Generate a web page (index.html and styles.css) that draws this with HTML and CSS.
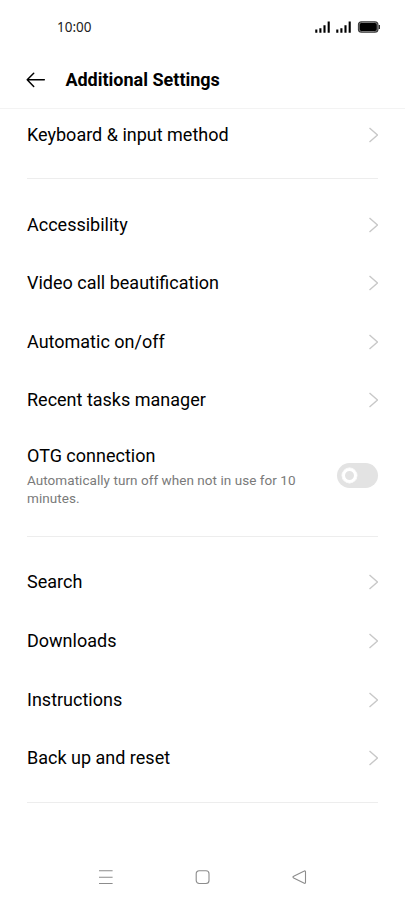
FILE: index.html
```html
<!DOCTYPE html>
<html lang="en">
<head>
<meta charset="utf-8">
<title>Additional Settings</title>
<link rel="stylesheet" href="styles.css">
</head>
<body>
<header class="status">
  <span class="time">10:00</span>
  <svg class="status-icons" width="66" height="14" viewBox="0 0 66 14">
    <g id="signal"><path d="M1.3 12.7V9.4M5.4 12.7V8.2M9.5 12.7V5.2M13.7 12.7V1.5" stroke="#000" stroke-width="2.1"/></g>
    <use href="#signal" x="21"/>
    <rect x="42.9" y="1.2" width="20.6" height="11.6" rx="3.6" fill="#333"/>
    <rect x="44.2" y="2.5" width="18" height="9" rx="2.4" fill="#000" stroke="#858585" stroke-width=".9"/>
    <path d="M64.3 5v4" stroke="#222" stroke-width="1.3"/>
  </svg>
</header>
<div class="title-bar">
  <svg class="back" width="20" height="16" viewBox="0 0 20 16"><path d="M18.3 7.7H1.2M7.7 1.2L1.2 7.7l6.5 6.8" stroke-linecap="round" stroke-linejoin="round"/></svg>
  <h1>Additional Settings</h1>
</div>
<main>
  <section class="group first">
    <div class="row"><span>Keyboard &amp; input method</span><svg class="chevron" viewBox="0 0 10 16"><path d="M1.5 1l8 7-8 7"/></svg></div>
  </section>
  <section class="group second">
    <div class="row"><span>Accessibility</span><svg class="chevron" viewBox="0 0 10 16"><path d="M1.5 1l8 7-8 7"/></svg></div>
    <div class="row"><span>Video call beautification</span><svg class="chevron" viewBox="0 0 10 16"><path d="M1.5 1l8 7-8 7"/></svg></div>
    <div class="row"><span>Automatic on/off</span><svg class="chevron" viewBox="0 0 10 16"><path d="M1.5 1l8 7-8 7"/></svg></div>
    <div class="row"><span>Recent tasks manager</span><svg class="chevron" viewBox="0 0 10 16"><path d="M1.5 1l8 7-8 7"/></svg></div>
    <div class="otg"><div><div class="label">OTG connection</div><p>Automatically turn off when not in use for 10 minutes.</p></div><div class="toggle"><i></i></div></div>
  </section>
  <section class="group third">
    <div class="row"><span>Search</span><svg class="chevron" viewBox="0 0 10 16"><path d="M1.5 1l8 7-8 7"/></svg></div>
    <div class="row"><span>Downloads</span><svg class="chevron" viewBox="0 0 10 16"><path d="M1.5 1l8 7-8 7"/></svg></div>
    <div class="row"><span>Instructions</span><svg class="chevron" viewBox="0 0 10 16"><path d="M1.5 1l8 7-8 7"/></svg></div>
    <div class="row"><span>Back up and reset</span><svg class="chevron" viewBox="0 0 10 16"><path d="M1.5 1l8 7-8 7"/></svg></div>
  </section>
</main>
<nav>
  <svg viewBox="0 0 16 16"><path d="M1 1.8h13.6M1 8.2h13.6M1 14.5h13.6"/></svg>
  <svg viewBox="0 0 16 16"><rect x="1.2" y="1.7" width="12.8" height="12.8" rx="3"/></svg>
  <svg viewBox="0 0 16 16"><path d="M12.8 2.2Q14.5 1.2 14.5 3v10.2Q14.5 15 12.8 14L2.7 9Q1.2 8 2.7 7.2z"/></svg>
</nav>
</body>
</html>
```

FILE: styles.css
```css
* { box-sizing: border-box; }
body { margin: 0; width: 405px; height: 902px; overflow: hidden; background: #fff; color: #000; font-family: Roboto, sans-serif; display: flex; flex-direction: column; }
.status { height: 52px; padding: 2px 24px 0 57px; display: flex; align-items: center; justify-content: space-between; flex: none; }
.time { font-family: "Noto Sans", sans-serif; font-size: 13.5px; color: #222; }
.title-bar { height: 57px; border-bottom: 1px solid #f3f3f3; padding: 0 26px 1px; display: flex; align-items: center; gap: 19.4px; flex: none; }
.back { fill: none; stroke: #000; stroke-width: 1.5; }
h1 { margin: 0; font-size: 18px; font-weight: 700; line-height: 24px; }
main { padding: 0 27px; flex: 1; }
.group { border-bottom: 1px solid #ededed; }
.first { height: 70px; }
.first .row { height: 51px; }
.second { height: 358px; padding-top: 16.6px; }
.second .row { height: 58.5px; }
.third { height: 266px; padding-top: 16px; }
.row { height: 58.67px; display: flex; align-items: center; justify-content: space-between; font-size: 18px; line-height: 24px; }
.chevron { width: 10px; height: 16px; fill: none; stroke: #c8c8c8; stroke-width: 1.4; }
.otg { display: flex; justify-content: space-between; align-items: center; padding-top: 14px; }
.label { font-size: 18px; line-height: 24px; }
p { margin: 3px 0 0; width: 290px; color: #7a7a7a; font-size: 13.5px; letter-spacing: .05px; line-height: 18px; }
.toggle { width: 41px; height: 25px; border-radius: 13px; background: #e3e3e3; padding: 5px; flex: none; }
.toggle i { display: block; width: 15px; height: 15px; border: 3.5px solid #fff; border-radius: 50%; box-shadow: 0 0 0 .4px #fff; }
nav { height: 50px; padding: 0 98px; display: flex; justify-content: space-between; align-items: center; flex: none; }
nav svg { width: 16px; height: 16px; fill: none; stroke: #8c8c8c; stroke-width: 1.1; }
```
